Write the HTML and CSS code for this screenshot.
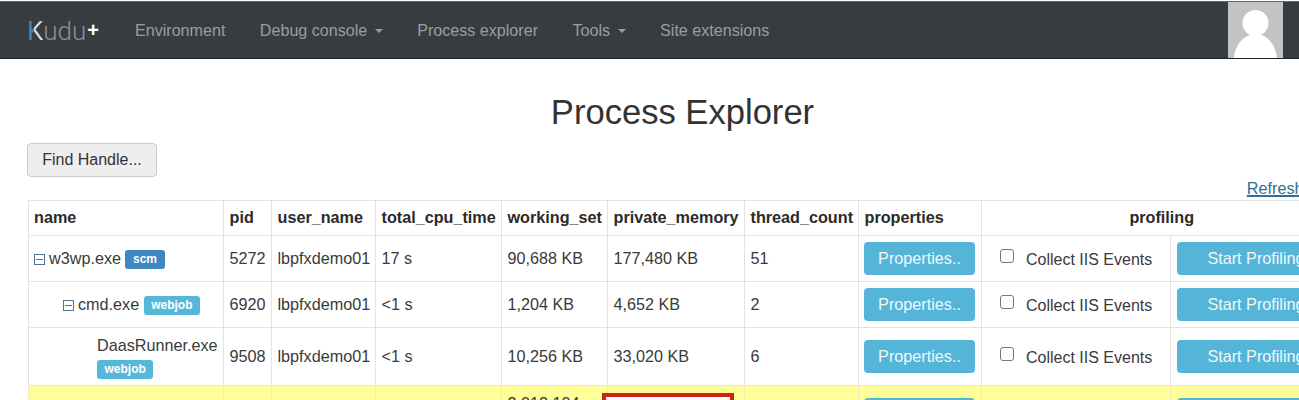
FILE: index.html
```html
<!DOCTYPE html>
<html lang="en">
<head>
<meta charset="utf-8">
<title>Process Explorer</title>
<link rel="stylesheet" href="styles.css">
</head>
<body>
<nav class="navbar">
  <a class="brand"><span class="brand-k">K</span>udu<span class="brand-plus">+</span></a>
  <ul class="nav">
    <li>Environment</li>
    <li>Debug console<span class="caret"></span></li>
    <li>Process explorer</li>
    <li>Tools<span class="caret"></span></li>
    <li>Site extensions</li>
  </ul>
  <svg class="avatar" viewBox="0 0 55 56" width="55" height="56" aria-hidden="true">
    <rect width="55" height="56" fill="#c3c3c3"/>
    <circle cx="27.500" cy="21" r="13" fill="#fff"/>
    <path d="M6 56C7 43 16 32 27.500 32S48 43 49 56Z" fill="#fff"/>
  </svg>
</nav>
<main class="content">
  <h1 class="title">Process Explorer</h1>
  <button class="btn-default" type="button">Find Handle...</button>
  <div class="refresh-row"><a class="refresh">Refresh</a></div>
  <table class="grid">
    <colgroup>
      <col class="c1"><col class="c2"><col class="c3"><col class="c4"><col class="c5"><col class="c6"><col class="c7"><col class="c8"><col class="c9"><col class="c10">
    </colgroup>
    <thead>
      <tr>
        <th class="first">name</th><th>pid</th><th>user_name</th><th>total_cpu_time</th><th>working_set</th><th>private_memory</th><th>thread_count</th><th>properties</th><th colspan="2" class="center">profiling</th>
      </tr>
    </thead>
    <tbody>
      <tr class="r1">
        <td class="first"><span class="tree"></span>w3wp.exe <span class="label scm">scm</span></td>
        <td>5272</td><td>lbpfxdemo01</td><td>17 s</td><td>90,688 KB</td><td>177,480 KB</td><td>51</td>
        <td><span class="btn-info">Properties..</span></td>
        <td class="chk"><span class="box"></span><span class="chk-label">Collect IIS Events</span></td>
        <td><span class="btn-info wide">Start Profiling</span></td>
      </tr>
      <tr class="r1">
        <td class="indent1"><span class="tree"></span>cmd.exe <span class="label">webjob</span></td>
        <td>6920</td><td>lbpfxdemo01</td><td>&lt;1 s</td><td>1,204 KB</td><td>4,652 KB</td><td>2</td>
        <td><span class="btn-info">Properties..</span></td>
        <td class="chk"><span class="box"></span><span class="chk-label">Collect IIS Events</span></td>
        <td><span class="btn-info wide">Start Profiling</span></td>
      </tr>
      <tr class="r2">
        <td class="indent2">DaasRunner.exe <span class="label">webjob</span></td>
        <td>9508</td><td>lbpfxdemo01</td><td>&lt;1 s</td><td>10,256 KB</td><td>33,020 KB</td><td>6</td>
        <td><span class="btn-info">Properties..</span></td>
        <td class="chk"><span class="box"></span><span class="chk-label">Collect IIS Events</span></td>
        <td><span class="btn-info wide">Start Profiling</span></td>
      </tr>
      <tr class="r3">
        <td></td><td></td><td></td><td></td>
        <td class="top">2,012,104</td>
        <td class="marked"><span class="redbox"></span></td>
        <td></td>
        <td class="btn-cell"><span class="btn-info">Properties..</span></td>
        <td></td>
        <td class="btn-cell"><span class="btn-info wide">Start Profiling</span></td>
      </tr>
    </tbody>
  </table>
</main>
</body>
</html>
```
FILE: styles.css
```css
html, body {
  margin: 0;
  height: 400px;
  overflow: hidden;
  background: #fff;
}
body {
  font-family: "Liberation Sans", Arial, sans-serif;
  font-size: 16.2px;
  color: #333;
}
.navbar {
  display: flex;
  align-items: center;
  height: 56px;
  margin-top: 1px;
  background: #373c41;
  border-top: 1px solid #666;
  border-bottom: 1px solid #1f2225;
  padding-left: 27px;
}
.brand {
  width: 108px;
  font-family: Roboto, "Liberation Sans", sans-serif;
  font-weight: 300;
  font-size: 26px;
  color: #8b8f93;
  line-height: 56px;
  white-space: nowrap;
}
.brand-k {
  background: linear-gradient(90deg, #3f86bd 46%, #d5dbe0 46%);
  -webkit-background-clip: text;
  background-clip: text;
  color: transparent;
  font-weight: 400;
}
.brand-plus {
  color: #fff;
  font-family: "Liberation Sans", sans-serif;
  font-size: 20px;
  font-weight: bold;
  vertical-align: 3px;
  margin-left: 1px;
}
.nav {
  display: flex;
  gap: 34.500px;
  list-style: none;
  margin: 0;
  padding: 0;
  font-size: 16.1px;
  color: #9d9d9d;
}
.caret {
  display: inline-block;
  margin-left: 7.500px;
  vertical-align: 3px;
  border-top: 4.500px solid #9d9d9d;
  border-left: 4.500px solid transparent;
  border-right: 4.500px solid transparent;
}
.avatar {
  margin-left: auto;
  margin-right: 16px;
  align-self: flex-end;
  display: block;
}
.content {
  padding-left: 27px;
  width: 1500px;
}
.title {
  width: 1311px;
  margin: 33px 0 0;
  text-align: center;
  font-weight: 400;
  font-size: 34.600px;
  line-height: 40px;
  color: #333;
}
.btn-default {
  display: block;
  margin-top: 11px;
  width: 130px;
  height: 34px;
  padding: 0;
  font: inherit;
  font-size: 16px;
  color: #333;
  background: #eee;
  border: 1px solid #ccc;
  border-radius: 4px;
}
.refresh-row {
  width: 1276.500px;
  height: 23px;
  text-align: right;
  line-height: 23px;
}
.refresh {
  color: #2f6f94;
  text-decoration: underline;
  text-decoration-thickness: 1.500px;
}
.grid {
  table-layout: fixed;
  border-collapse: collapse;
  width: 1313px;
  margin-left: 1px;
}
.c1 { width: 195px; }
.c2 { width: 48px; }
.c3 { width: 104px; }
.c4 { width: 126px; }
.c5 { width: 106px; }
.c6 { width: 137px; }
.c7 { width: 114px; }
.c8 { width: 123px; }
.c9 { width: 189px; }
.c10 { width: 171px; }
.grid th, .grid td {
  border: 1px solid #e3e3e3;
  padding: 0 5px 0 5.500px;
  text-align: left;
  vertical-align: middle;
  box-sizing: border-box;
  line-height: 23px;
}
.grid th { height: 35px; padding-bottom: 2px; font-weight: 700; color: #2b2b2b; }
.grid th.center { text-align: center; }
.grid th.first, .grid td.first { padding-left: 5px; }
.grid td { color: #3a3a3a; }
.r1 td { height: 46px; }
.r2 td { height: 58px; }
.r3 td { height: 60px; background: #ffff99; vertical-align: top; border-color: #eeeeb8; }
.r3 td.top { padding-top: 6px; }
.r3 td.btn-cell { padding-top: 12px; }
.grid td.indent1 { padding-left: 34px; }
.grid td.indent2 { padding-left: 68px; }
.tree {
  display: inline-block;
  box-sizing: border-box;
  width: 11px;
  height: 11px;
  margin-right: 4px;
  border: 1px solid #54708a;
  vertical-align: -0.500px;
  background: linear-gradient(#54708a, #54708a) center / 7px 1px no-repeat;
}
.label {
  display: inline-block;
  padding: 0 7.500px;
  height: 19px;
  line-height: 19px;
  font-size: 12px;
  font-weight: 700;
  color: #fff;
  background: #55b8da;
  border-radius: 3px;
  vertical-align: 1px;
}
.label.scm { background: #3f87c2; }
.btn-info {
  display: inline-block;
  box-sizing: border-box;
  width: 111px;
  height: 33px;
  margin-left: -0.500px;
  line-height: 32px;
  text-align: center;
  color: #eef8fb;
  background: #55b5d8;
  border-radius: 4px;
  vertical-align: middle;
}
.btn-info.wide { width: 158px; margin-left: 0.500px; }
.grid td.chk { padding-left: 17.500px; white-space: nowrap; }
.box {
  display: inline-block;
  box-sizing: border-box;
  width: 14px;
  height: 14px;
  border: 1px solid #767676;
  border-radius: 3px;
  background: #fff;
  margin-right: 12.500px;
  vertical-align: 1px;
}
.chk-label { position: relative; top: 1px; font-size: 16px; }
.marked { position: relative; }
.redbox {
  position: absolute;
  left: -6px;
  top: 7px;
  box-sizing: border-box;
  width: 132px;
  height: 48px;
  border: 4px solid #cc2218;
  background: #fff;
}
```
